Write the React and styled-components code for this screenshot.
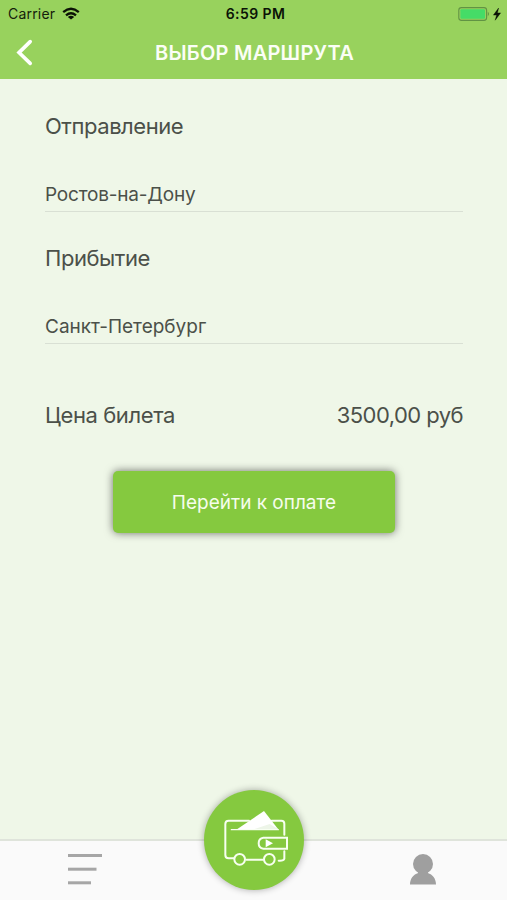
import React from 'react';
import styled, { createGlobalStyle } from 'styled-components';

const GlobalStyle = createGlobalStyle`
  * { box-sizing: border-box; }
  html, body { margin: 0; padding: 0; }
  body { font-family: Inter, "Liberation Sans", sans-serif; background: #eff7e8; }
  button { font: inherit; border: 0; padding: 0; background: none; }
`;

const Screen = styled.div`
  display: flex;
  flex-direction: column;
  width: 507px;
  height: 900px;
  overflow: hidden;
  background: #eff7e8;
  color: #4b5049;
`;

const Header = styled.header`
  display: flex;
  flex-direction: column;
  height: 79px;
  background: #98d25d;
`;

const StatusBar = styled.div`
  display: grid;
  grid-template-columns: 1fr auto 1fr;
  align-items: center;
  height: 27px;
  padding: 0 5px 0 8px;
  font-size: 14px;
  line-height: 18px;
  color: #15200b;
`;

const Carrier = styled.div`
  display: flex;
  align-items: center;
  gap: 7px;
  letter-spacing: 0.2px;
`;

const Clock = styled.div`
  padding-left: 1px;
  font-weight: 600;
  color: #0b1206;
  letter-spacing: 0.4px;
`;

const Power = styled.div`
  display: flex;
  justify-content: flex-end;
`;

const NavBar = styled.div`
  display: grid;
  grid-template-columns: 60px 1fr 60px;
  align-items: center;
  height: 52px;
`;

const BackButton = styled.button`
  display: flex;
  padding-left: 15px;
`;

const Title = styled.h1`
  margin: 0;
  padding-left: 2px;
  text-align: center;
  font-size: 20px;
  line-height: 24px;
  font-weight: 600;
  letter-spacing: 0.24px;
  color: #fbfef6;
  white-space: nowrap;
`;

const Content = styled.main`
  flex: 1;
  display: flex;
  flex-direction: column;
  padding: 32px 44px 0 45px;
`;

const Field = styled.section`
  height: 132px;
`;

const Label = styled.div`
  font-size: 22px;
  line-height: 30px;
  letter-spacing: ${(p) => p.$spacing || 0}px;
  white-space: nowrap;
`;

const Value = styled.div`
  height: 38px;
  margin-top: 33px;
  padding-top: 8px;
  border-bottom: 1px solid #d9e0d4;
  font-size: 19px;
  line-height: 26px;
  letter-spacing: ${(p) => p.$spacing || 0}px;
`;

const PriceRow = styled.div`
  display: flex;
  justify-content: space-between;
  margin-top: 25px;
`;

const PayButton = styled.button`
  align-self: center;
  width: 282px;
  height: 62px;
  margin-top: 41px;
  border-radius: 5px;
  background: #85c93f;
  box-shadow: 0 0 8px rgba(0, 0, 0, 0.55);
  color: #f6fdec;
  && { font-size: 19px; }
`;

const TabBar = styled.nav`
  display: grid;
  grid-template-columns: 1fr 1fr 1fr;
  height: 61px;
  border-top: 2px solid #dfe4db;
  background: #fafafa;
`;

const Tab = styled.button`
  display: flex;
  justify-content: center;
  align-items: flex-start;
  padding-top: 13px;
`;

const WalletButton = styled.button`
  display: flex;
  width: 100px;
  height: 100px;
  margin-top: -51px;
  justify-self: center;
  border-radius: 50%;
  background: #85c93f;
  box-shadow: 0 0 7px rgba(0, 0, 0, 0.32);
`;

const WifiIcon = () => (
  <svg width="18" height="14" viewBox="0 0 18 14" fill="none" stroke="#0b1206" strokeWidth="2.3">
    <path d="M1.2 5.2 Q9 -1.6 16.8 5.2" />
    <path d="M4 8.3 Q9 4.1 14 8.3" />
    <path d="M9 12.6 L5.8 10 Q9 7.5 12.2 10 Z" fill="#0b1206" stroke="none" />
  </svg>
);

const BatteryIcon = () => (
  <svg width="44" height="14" viewBox="0 0 44 14">
    <rect x="0.8" y="0.6" width="27.8" height="12.8" rx="2.6" fill="none" stroke="#619344" strokeWidth="1.1" />
    <rect x="2.4" y="2.2" width="24.6" height="9.6" rx="1.1" fill="#45dc67" />
    <path d="M29.8 4.8 Q32.2 7 29.8 9.2 Z" fill="#619344" />
    <path d="M40.6 1 L35.4 8.1 H38.6 L37.2 13.2 L42.6 5.9 H39.4 Z" fill="#0b1206" stroke="#0b1206" strokeWidth="0.4" />
  </svg>
);

const BackIcon = () => (
  <svg width="18" height="28" viewBox="0 0 18 28" fill="none" stroke="#fff" strokeWidth="3.6" strokeLinecap="round" strokeLinejoin="miter">
    <path d="M15.2 2.6 L4 13.6 L15.2 24.4" />
  </svg>
);

const MenuIcon = () => (
  <svg width="34" height="32" viewBox="0 0 34 32" fill="#a6a6a6">
    <rect x="0" y="0" width="34" height="3" />
    <rect x="0" y="13.7" width="28.5" height="3" />
    <rect x="0" y="27.3" width="23" height="3" />
  </svg>
);

const PersonIcon = () => (
  <svg width="26" height="31" viewBox="0 0 26 31" fill="#9f9f9f">
    <circle cx="13" cy="10" r="10" />
    <path d="M0 30.5 C0 24.5 3.5 20.5 8.2 19 L7 16 H19 L17.8 19 C22.5 20.5 26 24.5 26 30.5 Z" />
  </svg>
);

const WalletIcon = () => (
  <svg width="100" height="100" viewBox="43 30 300 300" fill="none" stroke="#f7fff0" strokeWidth="6" strokeLinecap="round" strokeLinejoin="round">
    <path d="M178 122 H117 Q107 122 107 132 V225 Q107 235 117 235 H132" />
    <path d="M246 122 H275 Q284 122 284 131 V164" />
    <path d="M170 239 H221" />
    <path d="M284 214 V236 Q282 243 267 242" />
    <path d="M125 149 H266" strokeWidth="4" />
    <path d="M142 148 L223 93 L265 147 Z" fill="#fff" stroke="none" />
    <path d="M195 147 L240 132 L265 147 Z" fill="#edf5e8" stroke="none" />
    <circle cx="150" cy="238" r="16" />
    <circle cx="239" cy="238" r="16" />
    <path d="M292 173 H221 Q207 175 207 190 Q207 205 221 206 H292 Z" strokeLinejoin="miter" />
    <path d="M228 178 L250 190 L228 202 Z" fill="#fff" stroke="none" />
  </svg>
);

export default function App() {
  return (
    <Screen>
      <GlobalStyle />
      <Header>
        <StatusBar>
          <Carrier>Carrier<WifiIcon /></Carrier>
          <Clock>6:59 PM</Clock>
          <Power><BatteryIcon /></Power>
        </StatusBar>
        <NavBar>
          <BackButton aria-label="Назад"><BackIcon /></BackButton>
          <Title>ВЫБОР МАРШРУТА</Title>
        </NavBar>
      </Header>
      <Content>
        <Field>
          <Label $spacing={-0.45}>Отправление</Label>
          <Value $spacing={-0.2}>Ростов-на-Дону</Value>
        </Field>
        <Field>
          <Label $spacing={-0.45}>Прибытие</Label>
          <Value>Санкт-Петербург</Value>
        </Field>
        <PriceRow>
          <Label $spacing={-0.4}>Цена билета</Label>
          <Label $spacing={-0.55}>3500,00 руб</Label>
        </PriceRow>
        <PayButton>Перейти к оплате</PayButton>
      </Content>
      <TabBar>
        <Tab aria-label="Меню"><MenuIcon /></Tab>
        <WalletButton aria-label="Билеты"><WalletIcon /></WalletButton>
        <Tab aria-label="Профиль"><PersonIcon /></Tab>
      </TabBar>
    </Screen>
  );
}
